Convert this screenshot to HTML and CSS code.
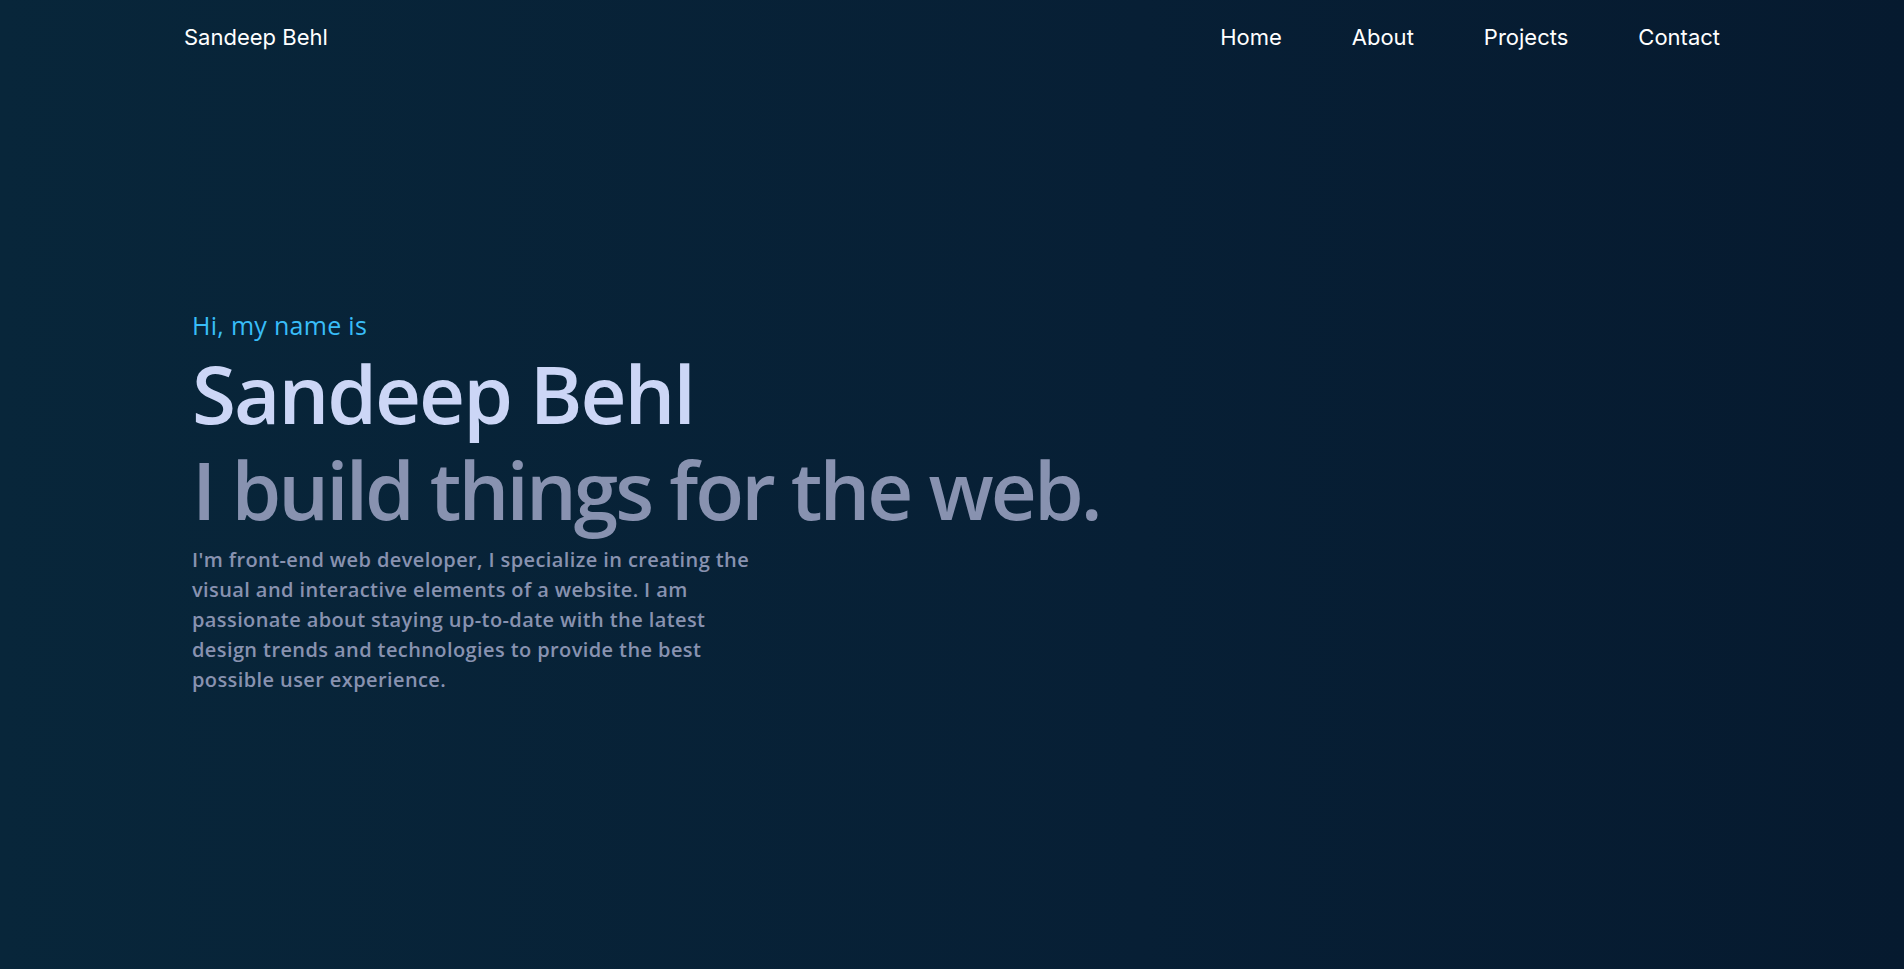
FILE: index.html
```html
<!DOCTYPE html>
<html lang="en">
<head>
<meta charset="utf-8">
<title>Sandeep Behl</title>
<link rel="stylesheet" href="styles.css">
</head>
<body>
<div class="page">
  <header class="nav">
    <a class="logo" href="#">Sandeep Behl</a>
    <nav class="links">
      <a href="#">Home</a>
      <a href="#">About</a>
      <a href="#">Projects</a>
      <a href="#">Contact</a>
    </nav>
  </header>
  <main class="hero">
    <p class="intro">Hi, my name is</p>
    <h1 class="name">Sandeep Behl</h1>
    <h2 class="tagline">I build things for the web.</h2>
    <p class="about">I'm front-end web developer, I specialize in creating the visual and interactive elements of a website. I am passionate about staying up-to-date with the latest design trends and technologies to provide the best possible user experience.</p>
  </main>
</div>
</body>
</html>
```
FILE: styles.css
```css
* { box-sizing: border-box; }
html, body { margin: 0; padding: 0; }
body {
  min-height: 100vh;
  background: linear-gradient(to right, #08263a 0%, #071f35 60%, #061a2f 100%);
  font-family: "Open Sans", "Noto Sans", sans-serif;
}
.page {
  width: 1536px;
  margin: 0 auto;
}
.nav {
  display: flex;
  justify-content: space-between;
  align-items: center;
  padding-top: 23px;
}
.nav a {
  font-family: Inter, "Liberation Sans", sans-serif;
  font-size: 22px;
  line-height: 28px;
  color: #ffffff;
  text-decoration: none;
}
.links {
  display: flex;
  gap: 70px;
}
.hero {
  padding-left: 8px;
  padding-top: 258px;
}
.intro {
  margin: 0;
  font-size: 25px;
  line-height: 32px;
  font-weight: 500;
  letter-spacing: 0.3px;
  color: #38bdf8;
}
.name {
  margin: 8px 0 0;
  font-size: 80px;
  line-height: 88px;
  font-weight: 600;
  letter-spacing: -2px;
  color: #ccd6f6;
}
.tagline {
  margin: 8px 0 0;
  font-size: 80px;
  line-height: 88px;
  font-weight: 600;
  letter-spacing: -2.9px;
  color: #8892b0;
}
.about {
  margin: 12px 0 0;
  max-width: 575px;
  font-size: 20px;
  line-height: 30px;
  font-weight: 600;
  letter-spacing: 0.4px;
  color: #8892b0;
}
```
